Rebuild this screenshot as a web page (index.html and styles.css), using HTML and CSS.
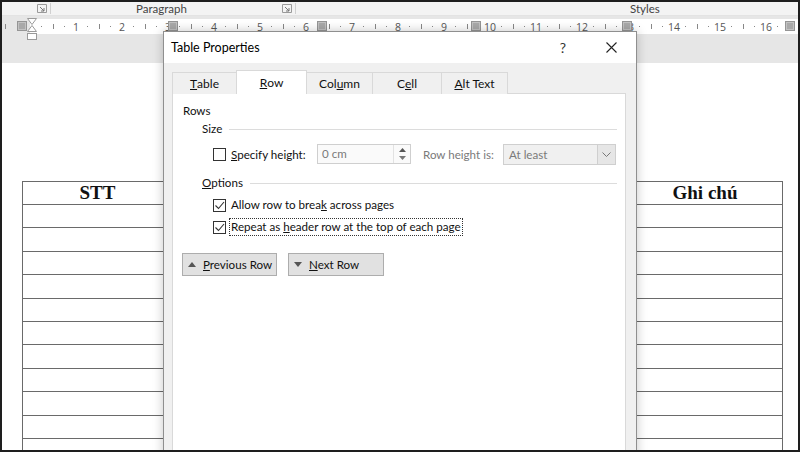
FILE: index.html
```html
<!doctype html>
<html lang="vi">
<head>
    <meta charset="utf-8">
    <title>Table Properties</title>
    <link rel="stylesheet" href="styles.css">
</head>
<body>
<div class="screen">
    <div class="ribbon">
        <span class="launcher" style="margin-left:35px"><svg width="10" height="9" viewBox="0 0 10 9"><path d="M0.5 0.5h9v8h-9z" fill="none" stroke="#9a9a9a"/><path d="M3 3l4 4M7 4v3h-3" fill="none" stroke="#777"/></svg></span>
        <span class="sep"></span>
        <span class="ribbon-label" style="margin-left:85px">Paragraph</span>
        <span class="launcher" style="margin-left:95px"><svg width="10" height="9" viewBox="0 0 10 9"><path d="M0.5 0.5h9v8h-9z" fill="none" stroke="#9a9a9a"/><path d="M3 3l4 4M7 4v3h-3" fill="none" stroke="#777"/></svg></span>
        <span class="sep"></span>
        <span class="ribbon-label" style="margin-left:334px">Styles</span>
    </div>

    <div class="ruler-row">
        <div class="ruler-margin"><i class="tick"></i></div>
        <div class="ruler">
            <span class="cm"><i class="dot"></i><i class="tick"></i><i class="dot"></i><b>1</b></span>
            <span class="cm"><i class="dot"></i><i class="tick"></i><i class="dot"></i><b>2</b></span>
            <span class="cm"><i class="dot"></i><i class="tick"></i><i class="dot"></i><b>3</b></span>
            <span class="cm"><i class="dot"></i><i class="tick"></i><i class="dot"></i><b>4</b></span>
            <span class="cm"><i class="dot"></i><i class="tick"></i><i class="dot"></i><b>5</b></span>
            <span class="cm"><i class="dot"></i><i class="tick"></i><i class="dot"></i><b>6</b></span>
            <span class="cm"><i class="dot"></i><i class="tick"></i><i class="dot"></i><b>7</b></span>
            <span class="cm"><i class="dot"></i><i class="tick"></i><i class="dot"></i><b>8</b></span>
            <span class="cm"><i class="dot"></i><i class="tick"></i><i class="dot"></i><b>9</b></span>
            <span class="cm"><i class="dot"></i><i class="tick"></i><i class="dot"></i><b>10</b></span>
            <span class="cm"><i class="dot"></i><i class="tick"></i><i class="dot"></i><b>11</b></span>
            <span class="cm"><i class="dot"></i><i class="tick"></i><i class="dot"></i><b>12</b></span>
            <span class="cm"><i class="dot"></i><i class="tick"></i><i class="dot"></i><b>13</b></span>
            <span class="cm"><i class="dot"></i><i class="tick"></i><i class="dot"></i><b>14</b></span>
            <span class="cm"><i class="dot"></i><i class="tick"></i><i class="dot"></i><b>15</b></span>
            <span class="cm"><i class="dot"></i><i class="tick"></i><i class="dot"></i><b>16</b></span>
            <span class="cm"><i class="dot"></i><i class="tick"></i></span>
        </div>
        <span class="col-marker" style="left:15px"></span>
        <span class="col-marker" style="left:166px"></span>
        <span class="col-marker" style="left:315px"></span>
        <span class="col-marker" style="left:469px"></span>
        <span class="col-marker" style="left:620px"></span>
        <span class="col-marker" style="left:783px"></span>
        <svg class="indent" width="10" height="24" viewBox="0 0 10 24">
            <path d="M0.5 0.5h9l-4.5 6z M0.5 13.5h9l-4.5 -6z" fill="#fff" stroke="#9a9a9a"/>
            <rect x="0.5" y="15.5" width="9" height="6" fill="#fff" stroke="#9a9a9a"/>
        </svg>
    </div>

    <div class="gutter"></div>

    <div class="page">
        <div class="doc-table">
            <div class="doc-row doc-head">
                <div class="cell c1">STT</div><div class="cell c2"></div><div class="cell c3"></div><div class="cell c4"></div><div class="cell c5">Ghi chú</div>
            </div>
            <div class="doc-row"><div class="cell c1"></div><div class="cell c2"></div><div class="cell c3"></div><div class="cell c4"></div><div class="cell c5"></div></div>
            <div class="doc-row"><div class="cell c1"></div><div class="cell c2"></div><div class="cell c3"></div><div class="cell c4"></div><div class="cell c5"></div></div>
            <div class="doc-row"><div class="cell c1"></div><div class="cell c2"></div><div class="cell c3"></div><div class="cell c4"></div><div class="cell c5"></div></div>
            <div class="doc-row"><div class="cell c1"></div><div class="cell c2"></div><div class="cell c3"></div><div class="cell c4"></div><div class="cell c5"></div></div>
            <div class="doc-row"><div class="cell c1"></div><div class="cell c2"></div><div class="cell c3"></div><div class="cell c4"></div><div class="cell c5"></div></div>
            <div class="doc-row"><div class="cell c1"></div><div class="cell c2"></div><div class="cell c3"></div><div class="cell c4"></div><div class="cell c5"></div></div>
            <div class="doc-row"><div class="cell c1"></div><div class="cell c2"></div><div class="cell c3"></div><div class="cell c4"></div><div class="cell c5"></div></div>
            <div class="doc-row"><div class="cell c1"></div><div class="cell c2"></div><div class="cell c3"></div><div class="cell c4"></div><div class="cell c5"></div></div>
            <div class="doc-row"><div class="cell c1"></div><div class="cell c2"></div><div class="cell c3"></div><div class="cell c4"></div><div class="cell c5"></div></div>
            <div class="doc-row"><div class="cell c1"></div><div class="cell c2"></div><div class="cell c3"></div><div class="cell c4"></div><div class="cell c5"></div></div>
            <div class="doc-row"><div class="cell c1"></div><div class="cell c2"></div><div class="cell c3"></div><div class="cell c4"></div><div class="cell c5"></div></div>
            <div class="doc-row"><div class="cell c1"></div><div class="cell c2"></div><div class="cell c3"></div><div class="cell c4"></div><div class="cell c5"></div></div>
        </div>
    </div>

    <div class="dialog">
        <div class="titlebar">
            <span class="title">Table Properties</span>
            <span class="help">?</span>
            <span class="close"><svg width="11" height="11" viewBox="0 0 11 11"><path d="M0.5 0.5l10 10M10.5 0.5l-10 10" stroke="#222" stroke-width="1.1"/></svg></span>
        </div>
        <div class="dialog-body">
            <div class="tabs">
                <span class="tab" style="width:65px"><u>T</u>able</span>
                <span class="tab active" style="width:71px"><u>R</u>ow</span>
                <span class="tab" style="width:67px">Col<u>u</u>mn</span>
                <span class="tab" style="width:70px">C<u>e</u>ll</span>
                <span class="tab" style="width:67px"><u>A</u>lt Text</span>
            </div>
            <div class="panel">
                <div class="heading">Rows</div>
                <div class="group-title">Size<span class="rule"></span></div>
                <div class="size-row">
                    <span class="check"></span>
                    <span class="field-label"><u>S</u>pecify height:</span>
                    <span class="spin">
                        <span class="spin-value">0 cm</span>
                        <span class="spin-btns">
                            <svg width="7" height="4" viewBox="0 0 7 4"><path d="M0 4h7l-3.5-4z" fill="#555"/></svg>
                            <svg width="7" height="4" viewBox="0 0 7 4"><path d="M0 0h7l-3.5 4z" fill="#777"/></svg>
                        </span>
                    </span>
                    <span class="combo-label">Row height is:</span>
                    <span class="combo">
                        <span class="combo-value">At least</span>
                        <span class="combo-arrow"><svg width="9" height="5" viewBox="0 0 9 5"><path d="M0.5 0.5l4 4 4-4" fill="none" stroke="#777"/></svg></span>
                    </span>
                </div>
                <div class="group-title options"><u>O</u>ptions<span class="rule"></span></div>
                <div class="opt-row">
                    <span class="check"><svg width="11" height="11" viewBox="0 0 11 11"><path d="M1.5 5.5l3 3 5.5-6.5" fill="none" stroke="#333" stroke-width="1.1"/></svg></span>
                    <span class="opt-label">Allow row to brea<u>k</u> across pages</span>
                </div>
                <div class="opt-row">
                    <span class="check"><svg width="11" height="11" viewBox="0 0 11 11"><path d="M1.5 5.5l3 3 5.5-6.5" fill="none" stroke="#333" stroke-width="1.1"/></svg></span>
                    <span class="opt-label focused">Repeat as <u>h</u>eader row at the top of each page</span>
                </div>
                <div class="buttons">
                    <span class="btn" style="width:95px"><svg width="8" height="5" viewBox="0 0 8 5"><path d="M0 5h8l-4-5z" fill="#555"/></svg><span><u>P</u>revious Row</span></span>
                    <span class="btn" style="width:96px"><svg width="8" height="5" viewBox="0 0 8 5"><path d="M0 0h8l-4 5z" fill="#555"/></svg><span><u>N</u>ext Row</span></span>
                </div>
            </div>
        </div>
    </div>
</div>
</body>
</html>
```

FILE: styles.css
```css
* {
    box-sizing: border-box;
}
body {
    margin: 0;
    background: #fff;
    font-family: Lato, "Liberation Sans", sans-serif;
}
.screen {
    position: relative;
    width: 800px;
    height: 452px;
    border: 2px solid #1e1e1e;
    overflow: hidden;
    display: flex;
    flex-direction: column;
    background: #fff;
}

/* ribbon strip */
.ribbon {
    height: 14px;
    background: #f3f3f3;
    border-bottom: 1px solid #e3e3e3;
    display: flex;
    align-items: center;
    font-size: 11.5px;
    color: #444;
}
.launcher {
    display: flex;
    width: 10px;
    height: 9px;
}
.sep {
    width: 1px;
    height: 11px;
    background: #d0d0d0;
    margin-left: 3px;
}
.ribbon-label {
    line-height: 14px;
}

/* ruler */
.ruler-row {
    position: relative;
    height: 20px;
    background: #e6e6e6;
    padding-top: 3px;
    display: flex;
}
.ruler-margin {
    flex: none;
    width: 28px;
    height: 15px;
    display: flex;
    align-items: center;
    padding-left: 3px;
}
.ruler {
    flex: 1;
    min-width: 0;
    overflow: hidden;
    height: 15px;
    background: #fff;
    display: flex;
    padding-left: 5.75px;
    white-space: nowrap;
}
.cm {
    display: flex;
    flex: none;
    width: 46px;
}
.cm > * {
    width: 11.5px;
    flex: none;
    display: flex;
    justify-content: center;
    align-items: center;
}
.cm b {
    font-weight: normal;
    font-size: 10.5px;
    color: #555;
    font-family: "Open Sans", sans-serif;
}
.dot::before {
    content: "";
    width: 1px;
    height: 1px;
    background: #888;
}
.tick::before {
    content: "";
    width: 1px;
    height: 5px;
    background: #888;
}
.ruler-margin .tick {
    display: flex;
}
.col-marker {
    position: absolute;
    top: 5px;
    width: 10px;
    height: 10px;
    background: #a9a9a9;
    border: 1px solid #959595;
    box-shadow: inset 0 0 0 1px #c2c2c2;
}
.indent {
    position: absolute;
    left: 25px;
    top: 2px;
}
.gutter {
    height: 27px;
    background: #e6e6e6;
}

/* document page */
.page {
    flex: 1;
    min-height: 0;
    background: #fff;
    padding: 118px 0 0 20px;
}
.doc-table {
    width: 761px;
    border-top: 1px solid #6a6a6a;
    border-left: 1px solid #6a6a6a;
}
.doc-row {
    display: flex;
    height: 23.4px;
    border-bottom: 1px solid #6a6a6a;
}
.doc-row.doc-head {
    height: 23px;
}
.cell {
    border-right: 1px solid #6a6a6a;
    font-family: "Liberation Serif", serif;
    font-weight: bold;
    font-size: 19px;
    line-height: 21px;
    text-align: center;
    color: #111;
}
.c1 { width: 150px; }
.c2 { width: 150px; }
.c3 { width: 154px; }
.c4 { width: 151px; }
.c5 { width: 155px; }

/* dialog */
.dialog {
    position: absolute;
    left: 161px;
    top: 29px;
    width: 474px;
    height: 440px;
    border: 1px solid #8f8f8f;
    background: #f0f0f0;
    box-shadow: 0 0 10px rgba(0, 0, 0, 0.22);
    font-size: 11.6px;
    color: #000;
}
.titlebar {
    height: 31px;
    background: #fff;
    display: flex;
    align-items: center;
    padding-left: 7px;
}
.title {
    flex: 1;
    font-size: 12.5px;
}
.help {
    width: 20px;
    text-align: center;
    font-size: 14px;
    color: #333;
}
.close {
    width: 46px;
    display: flex;
    justify-content: center;
    margin-left: 15px;
    margin-right: 2px;
}
.dialog-body {
    padding: 7px 10px 0 8px;
}
.tabs {
    display: flex;
    align-items: flex-end;
    height: 24px;
    padding-left: 1px;
    position: relative;
    z-index: 1;
    font-size: 12px;
}
.tab {
    height: 22px;
    margin-left: -1px;
    border: 1px solid #d9d9d9;
    border-bottom: none;
    background: #f0f0f0;
    display: flex;
    align-items: center;
    justify-content: center;
    color: #111;
}
.tab.active {
    height: 24px;
    background: #fff;
    position: relative;
}
.panel {
    margin-top: -1px;
    height: 380px;
    background: #fff;
    border: 1px solid #d9d9d9;
    padding: 9px 8px 0 10px;
    color: #111;
}
.heading {
    line-height: 16px;
}
.group-title {
    display: flex;
    align-items: center;
    margin: 2px 0 0 19px;
    line-height: 16px;
}
.group-title .rule {
    flex: 1;
    height: 1px;
    background: #dcdcdc;
    margin-left: 7px;
}
.group-title.options {
    margin-top: 10px;
}
.size-row {
    display: flex;
    align-items: center;
    height: 22px;
    margin-top: 6px;
    padding-left: 30px;
}
.check {
    width: 13px;
    height: 13px;
    border: 1px solid #333;
    background: #fff;
    display: flex;
    flex: none;
}
.field-label {
    width: 91px;
    padding-left: 5px;
    flex: none;
}
.combo-label {
    width: 80px;
    flex: none;
    color: #7a7a7a;
}
.spin {
    width: 94px;
    height: 20px;
    border: 1px solid #cfcfcf;
    background: #fafafa;
    display: flex;
    margin-right: 12px;
}
.spin-value {
    flex: 1;
    padding-left: 4px;
    line-height: 18px;
    color: #7a7a7a;
}
.spin-btns {
    width: 17px;
    display: flex;
    flex-direction: column;
    align-items: center;
    justify-content: space-evenly;
    border-left: 1px solid #e2e2e2;
}
.combo {
    width: 113px;
    height: 21px;
    border: 1px solid #cfcfcf;
    background: #f0f0f0;
    display: flex;
}
.combo-value {
    flex: 1;
    padding-left: 5px;
    line-height: 19px;
    color: #7a7a7a;
}
.combo-arrow {
    width: 18px;
    border-left: 1px solid #cfcfcf;
    background: #e6e6e6;
    display: flex;
    align-items: center;
    justify-content: center;
}
.opt-row {
    display: flex;
    align-items: center;
    height: 22px;
    padding-left: 30px;
}
.group-title.options + .opt-row {
    margin-top: 3px;
}
.opt-label {
    margin-left: 3px;
    padding: 0 1px;
    line-height: 16px;
    border: 1px solid transparent;
}
.opt-label.focused {
    border: 1px dotted #333;
}
.buttons {
    display: flex;
    gap: 11px;
    margin-top: 15px;
    margin-left: -1px;
}
.btn {
    height: 23px;
    background: #e1e1e1;
    border: 1px solid #adadad;
    display: flex;
    align-items: center;
    padding-left: 5px;
    gap: 7px;
    color: #111;
}
```
